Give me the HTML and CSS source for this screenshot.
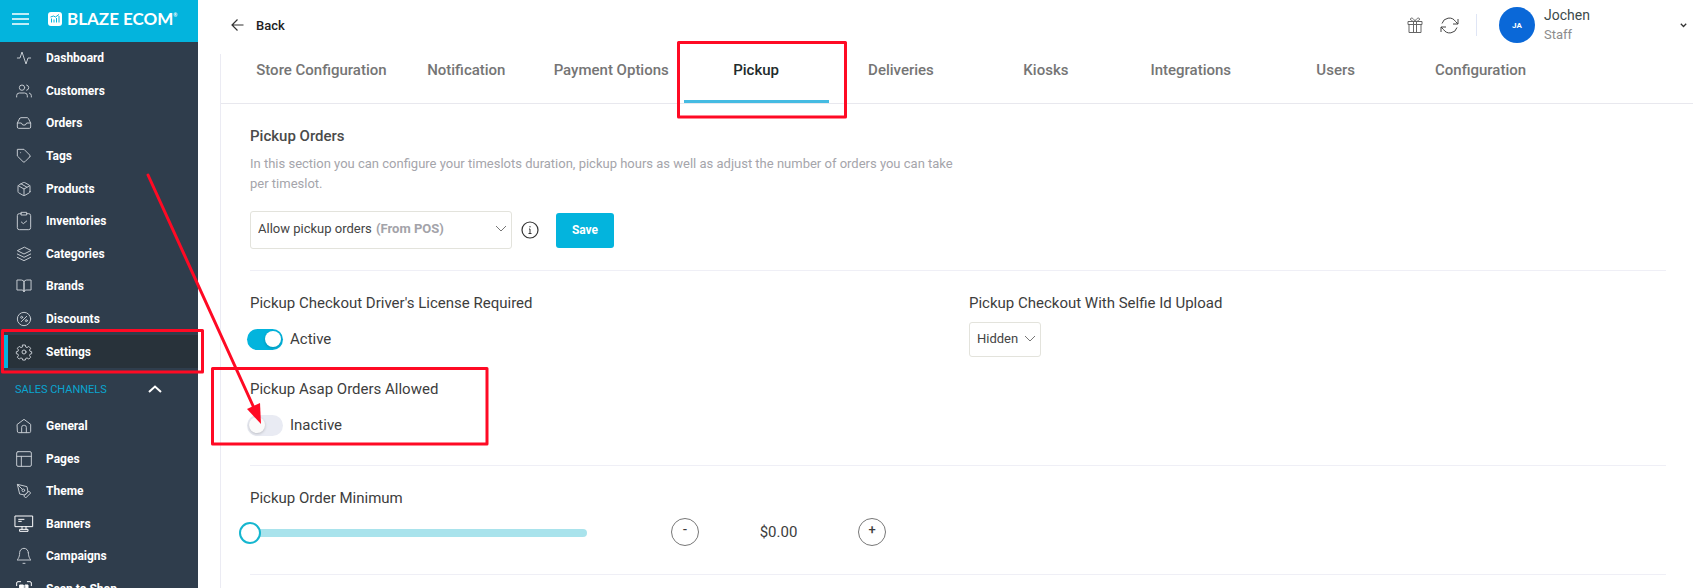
FILE: index.html
```html
<!DOCTYPE html>
<html lang="en">
<head>
<meta charset="utf-8">
<title>Pickup settings</title>
<link rel="stylesheet" href="styles.css">
</head>
<body>
<div class="app">
  <aside class="sidebar">
    <div class="brand">
      <button class="icon-btn menu" aria-label="Menu"><svg width="17" height="12" viewBox="0 0 17 12" stroke="#fff" stroke-width="1.6"><path d="M0 1h17M0 6h17M0 11h17"/></svg></button>
      <svg width="14" height="14" viewBox="0 0 14 14"><rect width="14" height="14" rx="3" fill="#fff"/><path d="M3.5 10.500V6.500M6 10.500V7.500M8.500 10.500V6M11 10.500V4M2.500 5l3-1 2 1 3.500-2.500" fill="none" stroke="#03b4dd" stroke-width="1"/></svg>
      <span class="brand-name">BLAZE ECOM<sup>®</sup></span>
    </div>
    <nav>
      <ul class="nav nav-main">
        <li><a href="#"><svg class="ico" viewBox="0 0 24 24"><path d="M22 12h-4l-3 9L9 3l-3 9H2"/></svg>Dashboard</a></li>
        <li><a href="#"><svg class="ico" viewBox="0 0 24 24"><path d="M17 21v-2a4 4 0 0 0-4-4H5a4 4 0 0 0-4 4v2M23 21v-2a4 4 0 0 0-3-3.900M16 3.100a4 4 0 0 1 0 7.800"/><circle cx="9" cy="7" r="4"/></svg>Customers</a></li>
        <li><a href="#"><svg class="ico" viewBox="0 0 24 24"><path d="M22 12h-6l-2 3h-4l-2-3H2M5.500 5.100L2 12v6a2 2 0 0 0 2 2h16a2 2 0 0 0 2-2v-6l-3.500-6.900A2 2 0 0 0 16.800 4H7.200a2 2 0 0 0-1.700 1.100z"/></svg>Orders</a></li>
        <li><a href="#"><svg class="ico" viewBox="0 0 24 24"><path d="M20.600 13.400l-7.200 7.200a2 2 0 0 1-2.800 0L2 12V2h10l8.600 8.600a2 2 0 0 1 0 2.800zM7 7h.01"/></svg>Tags</a></li>
        <li><a href="#"><svg class="ico" viewBox="0 0 24 24"><path d="M21 16V8a2 2 0 0 0-1-1.700l-7-4a2 2 0 0 0-2 0l-7 4A2 2 0 0 0 3 8v8a2 2 0 0 0 1 1.700l7 4a2 2 0 0 0 2 0l7-4A2 2 0 0 0 21 16zM3.300 7L12 12l8.700-5M12 22V12M7.500 4.200l9 5.200"/></svg>Products</a></li>
        <li><a href="#"><svg class="ico" viewBox="0 0 24 24"><path d="M16 1h3a3 3 0 0 1 3 3v18a3 3 0 0 1-3 3H5a3 3 0 0 1-3-3V4a3 3 0 0 1 3-3h3M8 -1h8v4H8zM8 13.500l3 2.500 5-4"/></svg>Inventories</a></li>
        <li><a href="#"><svg class="ico" viewBox="0 0 24 24"><path d="M12 2L2 7l10 5 10-5zM2 17l10 5 10-5M2 12l10 5 10-5"/></svg>Categories</a></li>
        <li><a href="#"><svg class="ico" viewBox="0 0 24 24"><path d="M2 3h6a4 4 0 0 1 4 4v14a3 3 0 0 0-3-3H2zM22 3h-6a4 4 0 0 0-4 4v14a3 3 0 0 1 3-3h7z"/></svg>Brands</a></li>
        <li><a href="#"><svg class="ico" viewBox="0 0 24 24"><circle cx="12" cy="12" r="10"/><circle cx="8.500" cy="9.500" r="1.500"/><circle cx="15.500" cy="14.500" r="1.500"/><path d="M8 16l8-8"/></svg>Discounts</a></li>
        <li><a href="#" class="active" aria-current="page"><svg class="ico" viewBox="0 0 24 24"><circle cx="12" cy="12" r="3"/><path d="M10 1.500h4l.6 3 2 .8 2.600-1.700 2.800 2.800-1.700 2.600.8 2 2.400.6v3l-2.400.6-.8 2 1.700 2.600-2.800 2.800-2.600-1.700-2 .8-.6 2.400h-4l-.6-2.400-2-.8-2.600 1.700L2 19.800l1.700-2.600-.8-2L.5 14.600v-3l2.400-.6.8-2L2 6.400l2.800-2.800 2.600 1.700 2-.8z"/></svg>Settings</a></li>
      </ul>
      <button class="group" aria-expanded="true">SALES CHANNELS<svg width="14" height="8" viewBox="0 0 14 8"><path d="M1 7l6-5.500L13 7" fill="none" stroke="#fff" stroke-width="2"/></svg></button>
      <ul class="nav nav-channels">
        <li><a href="#"><svg class="ico" viewBox="0 0 24 24"><path d="M2 9.500L12 2l10 7.500V20a2 2 0 0 1-2 2H4a2 2 0 0 1-2-2zM8.500 22v-8a3 3 0 0 1 3-3h1a3 3 0 0 1 3 3v8"/></svg>General</a></li>
        <li><a href="#"><svg class="ico" viewBox="0 0 24 24"><rect x="1" y="1" width="22" height="22" rx="2"/><path d="M1 8h22M8 23V8"/></svg>Pages</a></li>
        <li><a href="#"><svg class="ico" viewBox="0 0 24 24"><path d="M12 19l7-7 3 3-7 7zM18 13l-1.500-7.500L2 2l3.500 14.500L13 18zM2 2l7.600 7.600"/><circle cx="11" cy="11" r="2"/></svg>Theme</a></li>
        <li><a href="#"><svg class="ico bright" viewBox="0 0 24 24"><path d="M-1 0h26v16H-1zM4 5h8M4 8h4M9 16v4M15 16v4M6 20h12v3H6z"/></svg>Banners</a></li>
        <li><a href="#"><svg class="ico" viewBox="0 0 24 24"><path d="M18.500 7a6.500 6.500 0 0 0-13 0c0 8-4 11-4 11h21s-4-3-4-11M10.500 23h3"/></svg>Campaigns</a></li>
        <li><a href="#"><svg class="ico bright" viewBox="0 0 24 24"><path d="M1 7V3a2 2 0 0 1 2-2h4M17 1h4a2 2 0 0 1 2 2v4M23 17v4a2 2 0 0 1-2 2h-4M7 23H3a2 2 0 0 1-2-2v-4"/><path d="M6 6h5v5H6zM14 6h4v5h-4zM6 14h5v4H6zM14 14h4v4h-4z" fill="#fff"/></svg>Scan to Shop</a></li>
      </ul>
    </nav>
  </aside>

  <main class="main">
    <header class="topbar">
      <a href="#" class="back"><svg width="13" height="12" viewBox="0 0 13 12" fill="none" stroke="#333" stroke-width="1.200"><path d="M12.500 6H1M6.500.5L1 6l5.500 5.500"/></svg>Back</a>
      <div class="tools">
        <button class="icon-btn" aria-label="Gifts"><svg width="16" height="16" viewBox="0 0 16 16" fill="none" stroke="#666" stroke-width="1"><path d="M1 4.500h14v3H1zM2 7.500h12v8H2zM6.500 4.500v11M9.500 4.500v11M8 4.500C5 4.500 3.500 3.500 3.500 2S6.500.5 8 4.500C9.500.5 12.500.5 12.500 2S11 4.500 8 4.500"/></svg></button>
        <button class="icon-btn" aria-label="Refresh"><svg width="19" height="17" viewBox="0 0 19 17" fill="none" stroke="#444" stroke-width="1"><path d="M18 2v5h-5M1 15v-5h5M2 6.500A7.500 7.500 0 0 1 15.500 4.500L18 7M17 10.500A7.500 7.500 0 0 1 3.500 12.500L1 10"/></svg></button>
        <span class="sep"></span>
        <button class="user">
          <span class="avatar">JA</span>
          <span class="who"><span class="name">Jochen</span><span class="role">Staff</span></span>
          <svg width="7" height="5" viewBox="0 0 7 5" fill="none" stroke="#333" stroke-width="1.300"><path d="M.8.8l2.700 2.700L6.200.8"/></svg>
        </button>
      </div>
    </header>

    <div class="panel">
      <nav class="tabs">
        <a href="#">Store Configuration</a><a href="#">Notification</a><a href="#">Payment Options</a><a href="#" class="current" aria-current="page">Pickup</a><a href="#">Deliveries</a><a href="#">Kiosks</a><a href="#">Integrations</a><a href="#">Users</a><a href="#">Configuration</a>
      </nav>

      <div class="content">
        <section class="block intro">
          <h2>Pickup Orders</h2>
          <p>In this section you can configure your timeslots duration, pickup hours as well as adjust the number of orders you can take per timeslot.</p>
          <div class="row">
            <label class="select wide">
              <select aria-label="Pickup orders mode"><option>Allow pickup orders</option></select>
              <span class="source">(From POS)</span>
              <svg width="12" height="7" viewBox="0 0 12 7"><path d="M1 1l5 5 5-5"/></svg>
            </label>
            <svg class="info" width="18" height="18" viewBox="0 0 18 18" fill="none" stroke="#333" stroke-width="1.200"><circle cx="9" cy="9" r="8"/><path d="M8 8h1v4.500M7.500 12.500h3M9 5v1.400" stroke-width="1"/></svg>
            <button class="save">Save</button>
          </div>
        </section>

        <section class="block checks">
          <div class="col">
            <div class="field">
              <h3>Pickup Checkout Driver's License Required</h3>
              <label class="switch"><input type="checkbox" role="switch" checked>Active</label>
            </div>
            <div class="field">
              <h3>Pickup Asap Orders Allowed</h3>
              <label class="switch"><input type="checkbox" role="switch">Inactive</label>
            </div>
          </div>
          <div class="col">
            <div class="field selfie">
              <h3><label for="selfie">Pickup Checkout With Selfie Id Upload</label></h3>
              <div class="select small">
                <select id="selfie"><option>Hidden</option></select>
                <svg width="12" height="7" viewBox="0 0 12 7"><path d="M1 1l5 5 5-5"/></svg>
              </div>
            </div>
          </div>
        </section>

        <section class="block minimum">
          <h3><label for="minimum">Pickup Order Minimum</label></h3>
          <div class="row">
            <input id="minimum" class="slider" type="range" min="0" max="100" value="0">
            <div class="stepper">
              <button aria-label="Decrease">-</button>
              <output for="minimum">$0.00</output>
              <button aria-label="Increase">+</button>
            </div>
          </div>
        </section>
      </div>
    </div>
  </main>

  <svg class="marks" width="860" height="460" viewBox="0 0 860 460" fill="none" stroke="#ff0a24" stroke-width="3" stroke-linejoin="round" stroke-linecap="round" aria-hidden="true">
    <rect x="678.5" y="42.500" width="167" height="74.500"/>
    <rect x="2.500" y="330.500" width="200" height="41.500"/>
    <rect x="212.500" y="368.500" width="274.500" height="75.500"/>
    <path d="M148 175l106 233"/>
    <path d="M261 424l-14-15 13-6z" fill="#ff0a24" stroke="none"/>
  </svg>
</div>
</body>
</html>
```

FILE: styles.css
```css
* { box-sizing: border-box; }

body {
  margin: 0;
  font-family: Roboto, "Liberation Sans", sans-serif;
  font-size: 13px;
  color: #3d3d3d;
  background: #fff;
}

h2, h3, p, ul { margin: 0; padding: 0; }
h2, h3 { font-size: 15px; font-weight: 500; line-height: 20px; color: #4a4a4a; }
h3 { font-weight: 400; color: #3d3d3d; }
ul { list-style: none; }
a { color: inherit; text-decoration: none; }
button, select, input { font: inherit; color: inherit; }
button { border: 0; padding: 0; background: none; }

.app {
  position: relative;
  display: flex;
  height: 100vh;
  overflow: hidden;
}

.sidebar {
  flex: 0 0 198px;
  overflow: hidden;
  background: #2f3d4c;
  color: #fff;
}

.brand {
  display: flex;
  align-items: center;
  height: 42px;
  padding: 0 12px 4px;
  background: #03b4dd;
}
.menu { margin-right: 19px; }
.icon-btn { display: flex; }
.brand-name {
  margin-left: 5px;
  font-family: Lato, sans-serif;
  font-size: 17px;
  font-weight: 700;
  line-height: 20px;
}
.brand-name sup { font-size: 5px; vertical-align: 8px; line-height: 0; }

.nav { display: grid; grid-auto-rows: 1fr; }
.nav-main { height: 326px; }
.nav-channels { height: 195px; }
.nav a {
  display: flex;
  align-items: center;
  gap: 14px;
  height: 100%;
  padding-left: 16px;
  font-size: 12px;
  font-weight: 700;
}
.nav .active {
  margin-left: 4px;
  padding-left: 8px;
  border-left: 4px solid #03b4dd;
  background: #28323a;
}
.ico {
  width: 16px;
  height: 16px;
  fill: none;
  stroke: #c3c9cf;
  stroke-width: 1.5;
  stroke-linecap: round;
  stroke-linejoin: round;
  overflow: visible;
}
.bright { stroke: #fff; }

.group {
  display: flex;
  align-items: center;
  justify-content: space-between;
  width: 100%;
  height: 42px;
  padding: 0 36px 0 15px;
  font-size: 11px;
  color: #0aa5d0;
}

.main { flex: 1; min-width: 0; }

.topbar {
  display: flex;
  align-items: center;
  justify-content: space-between;
  height: 54px;
  padding: 0 6px 4px 33px;
}
.back {
  display: flex;
  align-items: center;
  gap: 12px;
  font-size: 13px;
  font-weight: 500;
  color: #222;
}
.tools { display: flex; align-items: center; }
.tools .icon-btn { margin-right: 17px; }
.sep { width: 1px; height: 22px; background: #dfe5f5; }
.user {
  display: flex;
  align-items: center;
  width: 207px;
  margin-left: 3px;
  padding-left: 19px;
  text-align: left;
}
.avatar {
  display: grid;
  place-items: center;
  width: 36px;
  height: 36px;
  border-radius: 50%;
  background: #0a68d8;
  color: #fff;
  font-size: 8px;
  font-weight: 700;
}
.who { flex: 1; display: flex; flex-direction: column; margin-left: 9px; line-height: 19px; }
.name { font-size: 14px; color: #3c4a4a; }
.role { font-size: 13px; color: #8c8c8c; }

.panel {
  margin-left: 22px;
  height: calc(100vh - 54px);
  border-left: 1px solid #ebebf3;
}

.tabs {
  display: grid;
  grid-template-columns: repeat(9, 1fr);
  height: 50px;
  padding: 0 140px 0 28px;
  border-bottom: 1px solid #e8e8ee;
}
.tabs a {
  padding-top: 6px;
  font-size: 15px;
  line-height: 20px;
  font-weight: 500;
  text-align: center;
  color: #757575;
  white-space: nowrap;
}
.tabs .current { color: #222b2b; border-bottom: 3px solid #45bbe2; }

.content { padding: 0 27px 0 29px; }
.block { border-bottom: 1px solid #efeff6; }

.intro { height: 167px; padding-top: 22px; }
.intro p {
  width: 50%;
  margin-top: 8px;
  line-height: 20px;
  color: #a5a5ab;
}
.row { display: flex; align-items: center; }
.intro .row { margin-top: 17px; }

.select {
  display: flex;
  align-items: center;
  border: 1px solid #e3e3dc;
  border-radius: 3px;
  background: #fff;
}
.select select {
  appearance: none;
  border: 0;
  padding: 0;
  background: transparent;
  color: #444;
}
.select svg { margin-left: auto; fill: none; stroke: #777; stroke-width: 1; }
.wide { width: 262px; height: 38px; padding: 0 4px 4px 7px; }
.source { margin-left: 4px; font-weight: 700; color: #a3a3a9; }
.small { width: 72px; height: 35px; padding: 0 4px 2px 7px; }

.info { margin: 0 17px 0 9px; }
.save {
  width: 58px;
  height: 35px;
  border-radius: 3px;
  background: #03b4dd;
  color: #fff;
  font-size: 12px;
  font-weight: 700;
}

.checks {
  display: grid;
  grid-template-columns: 719px 1fr;
  height: 195px;
  padding-top: 22px;
}
.field { height: 86px; }
.switch {
  display: flex;
  align-items: center;
  gap: 7px;
  margin: 15px 0 0 -3px;
  font-size: 15px;
  line-height: 22px;
}
.switch input {
  appearance: none;
  display: flex;
  align-items: center;
  width: 36px;
  height: 21px;
  margin: 0;
  padding: 0 2px;
  border-radius: 11px;
  background: #e9ebf3;
}
.switch input::before {
  content: "";
  width: 16px;
  height: 16px;
  border-radius: 50%;
  background: #fafafa;
  box-shadow: 0 1px 3px #0003;
}
.switch input:checked { background: #03b4dd; justify-content: flex-end; }
.switch input:checked::before { background: #fff; }
.selfie .select { margin-top: 9px; }

.minimum { height: 109px; padding-top: 22px; }
.minimum .row { margin-top: 7px; }
.slider {
  appearance: none;
  width: 348px;
  height: 30px;
  margin: 3px 84px 0 -11px;
  background: none;
}
.slider::-webkit-slider-runnable-track {
  height: 8px;
  border-radius: 4px;
  background: linear-gradient(to right, transparent 11px, #a9e3ec 11px);
}
.slider::-webkit-slider-thumb {
  appearance: none;
  width: 22px;
  height: 22px;
  margin-top: -7px;
  border: 2px solid #15b6cf;
  border-radius: 50%;
  background: #fff;
}
.stepper {
  display: flex;
  align-items: center;
  justify-content: space-between;
  width: 215px;
  font-size: 15px;
}
.stepper button {
  width: 28px;
  height: 28px;
  padding-bottom: 4px;
  border: 1px solid #777;
  border-radius: 50%;
  font-size: 13px;
  line-height: 20px;
  font-weight: 500;
}

.marks { position: absolute; top: 0; left: 0; pointer-events: none; }
```
